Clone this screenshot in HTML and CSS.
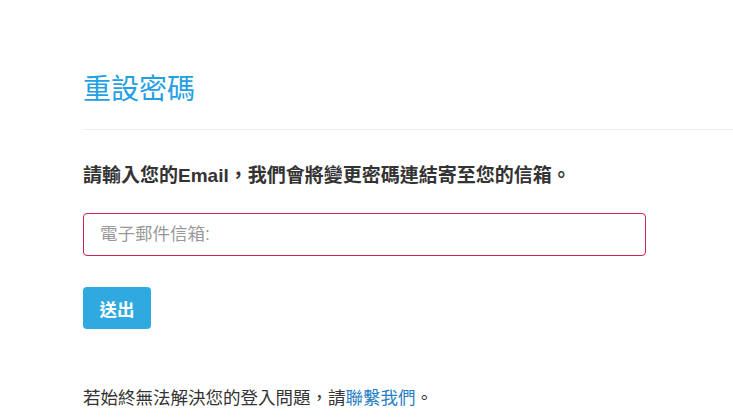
FILE: index.html
```html
<!DOCTYPE html>
<html lang="zh-Hant">
<head>
    <meta charset="UTF-8">
    <meta name="viewport" content="width=device-width, initial-scale=1.0">
    <title>重設密碼</title>
    <link rel="stylesheet" href="styles.css">
</head>
<body>
    <div class="page">
        <div class="page-header">
            <h1>重設密碼</h1>
        </div>
        <form class="reset-form" onsubmit="return false;">
            <p class="lead">請輸入您的Email，我們會將變更密碼連結寄至您的信箱。</p>
            <input type="email" class="email-input" placeholder="電子郵件信箱:">
            <button type="submit" class="btn-submit">送出</button>
        </form>
        <p class="help">若始終無法解決您的登入問題，請<a href="#">聯繫我們</a>。</p>
    </div>
</body>
</html>
```

FILE: styles.css
```css
body {
    margin: 0;
    background: #fff;
    color: #333;
    font-family: "Liberation Sans", "Noto Sans CJK TC", sans-serif;
}
.page {
    padding: 74px 0 0 83px;
}
.page-header {
    padding-bottom: 24px;
    border-bottom: 1px solid #eee;
}
h1 {
    margin: 0;
    font-size: 28px;
    font-weight: normal;
    line-height: 31px;
    color: #23a0e4;
}
.reset-form {
    width: 563px;
}
.lead {
    margin: 33px 0 0;
    font-size: 19px;
    font-weight: bold;
    line-height: 26px;
    color: #333;
}
.email-input {
    display: block;
    box-sizing: border-box;
    width: 100%;
    height: 43px;
    margin-top: 24px;
    padding: 0 16px;
    border: 1px solid #c9264e;
    border-radius: 4px;
    font-family: inherit;
    font-size: 17.5px;
    color: #555;
}
.email-input::placeholder {
    color: #999;
}
.btn-submit {
    display: block;
    margin-top: 31px;
    width: 68px;
    height: 42px;
    padding: 0;
    border: none;
    border-radius: 4px;
    background: #2fa9e0;
    color: #fff;
    font-family: inherit;
    font-size: 17.5px;
    font-weight: bold;
    cursor: pointer;
}
.help {
    margin: 57px 0 0;
    font-size: 17.5px;
    line-height: 24px;
    color: #333;
}
.help a {
    color: #2a7fc4;
    text-decoration: none;
}
```
